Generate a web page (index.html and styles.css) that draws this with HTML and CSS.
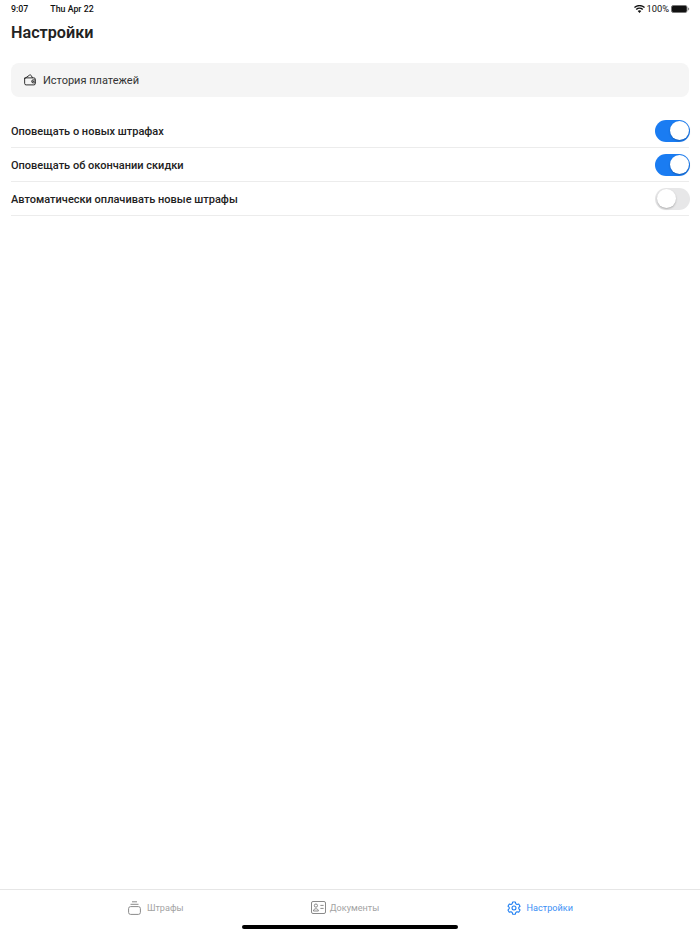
FILE: index.html
```html
<!DOCTYPE html>
<html lang="ru">
<head>
<meta charset="utf-8">
<title>Настройки</title>
<link rel="stylesheet" href="styles.css">
</head>
<body>
<div class="app">
  <div class="status">
    <div class="status-left"><span>9:07</span><span>Thu Apr 22</span></div>
    <div class="status-right">
      <svg class="wifi" width="11" height="8" viewBox="0 0 11 8"><path d="M5.5 8 3.7 6a2.6 2.6 0 0 1 3.6 0zM2.8 5.1 1.7 3.9a5.6 5.6 0 0 1 7.6 0L8.2 5.1a4 4 0 0 0-5.4 0zM.9 3 0 2a8.2 8.2 0 0 1 11 0l-.9 1A6.8 6.8 0 0 0 .9 3z" fill="#111"/></svg>
      <span>100%</span>
      <svg class="battery" width="19" height="8" viewBox="0 0 19 8"><rect x=".5" y=".5" width="15.5" height="7" rx="1.8" fill="#111" stroke="#777"/><path d="M17 2.6c.8.2 1.2.8 1.2 1.4s-.4 1.2-1.2 1.4z" fill="#888"/></svg>
    </div>
  </div>
  <h1 class="title">Настройки</h1>
  <a class="history">
    <svg width="14" height="12" viewBox="0 0 14 13" fill="none" stroke="#222" stroke-width="1"><path d="M1.2 4.2h10a1.6 1.6 0 0 1 1.6 1.6v4.4a1.6 1.6 0 0 1-1.6 1.6H2.8a1.6 1.6 0 0 1-1.6-1.6z"/><path d="M1.2 5 6.5 1.2c.7-.4 1.4-.2 1.8.4L9.6 4M10 8h1.6" stroke-linecap="round"/><path d="M12.8 6.4H10.4a1.6 1.6 0 0 0 0 3.2h2.4"/></svg>
    <span>История платежей</span>
  </a>
  <div class="rows">
    <div class="row"><span class="label">Оповещать о новых штрафах</span><div class="toggle on"><i class="knob"></i></div></div>
    <div class="row"><span class="label">Оповещать об окончании скидки</span><div class="toggle on"><i class="knob"></i></div></div>
    <div class="row"><span class="label">Автоматически оплачивать новые штрафы</span><div class="toggle"><i class="knob"></i></div></div>
  </div>
  <nav class="tabs">
    <div class="tab fines">
      <svg width="13" height="14" viewBox="0 0 13 14" fill="none" stroke="#8a8a8a" stroke-width="1"><path d="M4 .8h5M2.5 3.3h8"/><rect x=".6" y="5.6" width="11.8" height="7.8" rx="2"/></svg>
      <span>Штрафы</span>
    </div>
    <div class="tab docs">
      <svg width="15" height="13" viewBox="0 0 15 13" fill="none" stroke="#8a8a8a" stroke-width="1"><rect x=".5" y=".5" width="14" height="12" rx="1.5"/><circle cx="4.9" cy="4.6" r="1.6"/><path d="M2.4 10c0-3 5-3 5 0zM9.4 4.4h3.2M9.4 7.4h3.2"/></svg>
      <span>Документы</span>
    </div>
    <div class="tab active">
      <svg width="14" height="14" viewBox="0 0 24 24" fill="none" stroke="#1a7cf2" stroke-width="1.8" stroke-linejoin="round"><circle cx="12" cy="12" r="3.4"/><path d="M9.6 1.8h4.8l.7 3 2 1.1 3-.9 2.3 4-2.2 2.1v2.2l2.2 2.1-2.3 4-3-.9-2 1.1-.7 3H9.6l-.7-3-2-1.1-3 .9-2.3-4L3.8 13v-2.2L1.6 8.9 3.9 5l3 .9 2-1.1z"/></svg>
      <span>Настройки</span>
    </div>
    <div class="home"></div>
  </nav>
</div>
</body>
</html>
```

FILE: styles.css
```css
* { box-sizing: border-box; }
html, body { margin: 0; height: 100%; background: #fff; }
body { font-family: Roboto, "Liberation Sans", sans-serif; color: #222; }
.app { height: 934px; display: flex; flex-direction: column; overflow: hidden; }
.status { height: 16px; padding: 1px 10px 0 11px; display: flex; justify-content: space-between; align-items: center; font-size: 8.8px; font-weight: 500; color: #111; }
.status-left { display: flex; gap: 22px; }
.status-right { display: flex; align-items: center; gap: 2px; font-size: 9.3px; font-weight: 400; }
.title { margin: 8px 0 0 11px; font-size: 16.2px; line-height: 18px; font-weight: 600; color: #222; }
.history { margin: 21px 11px 0; height: 34px; padding-left: 12px; display: flex; align-items: center; gap: 6px; background: #f5f5f5; border-radius: 8px; font-size: 11px; color: #333; }
.rows { margin: 17px 11px 0; }
.row { height: 34px; display: flex; justify-content: space-between; align-items: center; border-bottom: 1px solid #ececec; font-size: 11px; font-weight: 500; color: #222; }
.label { padding-top: 2px; }
.toggle { width: 35px; height: 22px; margin-right: -1px; border-radius: 11px; background: #e7e7e8; padding: 1.5px; display: flex; }
.toggle.on { background: #1a7cf2; justify-content: flex-end; }
.knob { width: 19px; height: 19px; border-radius: 50%; background: #fff; box-shadow: 0 1px 2px rgba(0,0,0,.25); }
.tabs { position: relative; margin-top: auto; height: 45px; padding-left: 61px; border-top: 1px solid #e6e6e6; display: flex; }
.tab { flex: 0 0 202px; height: 35px; display: flex; align-items: center; justify-content: center; gap: 5.5px; font-size: 9.1px; color: #a3a3a3; }
.tab.fines { flex-basis: 190px; }
.tab.docs { flex-basis: 188px; gap: 4px; }
.tab.active { color: #3a8ff5; }
.home { position: absolute; left: 242px; bottom: 5px; width: 216px; height: 4px; border-radius: 2px; background: #000; }
```
